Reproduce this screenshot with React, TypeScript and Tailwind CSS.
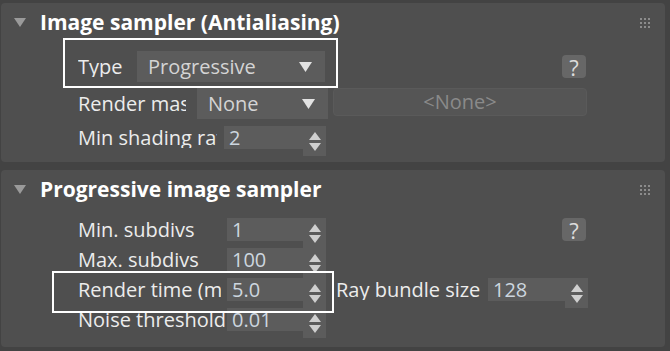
import React from "react";

const FONT = "font-['Open_Sans',_'Noto_Sans',_sans-serif]";

function Caret() {
  return (
    <svg width="12" height="9" viewBox="0 0 12 9" className="shrink-0">
      <path d="M0 0 H12 L6 9 Z" fill="#9a9a9a" />
    </svg>
  );
}

function Grip() {
  return (
    <div className="grid grid-cols-3 gap-[2px] w-[10px]">
      {Array.from({ length: 9 }).map((_, i) => (
        <span key={i} className="w-[2px] h-[2px] bg-[#8c8c8c]" />
      ))}
    </div>
  );
}

function Help() {
  return (
    <div className="w-[24px] h-[23px] rounded-[4px] bg-[#676767] flex items-center justify-center text-[22px] leading-none text-[#dcdcdc]">
      ?
    </div>
  );
}

function Dropdown({ value, width }: { value: string; width: string }) {
  return (
    <div className={`${width} h-[31px] bg-[#5c5c5c] flex items-center pl-[11px] pr-[13px] shrink-0`}>
      <span className="text-[20px] text-[#d4d4d4] leading-none">{value}</span>
      <svg width="13" height="10" viewBox="0 0 13 10" className="ml-auto">
        <path d="M0 0 H13 L6.5 10 Z" fill="#e2e2e2" />
      </svg>
    </div>
  );
}

function Spinner({ value, width }: { value: string; width: string }) {
  return (
    <div className={`${width} h-[30px] flex items-start shrink-0`}>
      <div className="flex-1 h-[23px] bg-[#5c5c5c] flex items-center pl-[5px]">
        <span className="text-[20px] text-[#cdd6df] leading-none">{value}</span>
      </div>
      <div className="w-[23px] h-[30px] bg-[#5c5c5c] flex flex-col items-center justify-center gap-[3px]">
        <svg width="12" height="8" viewBox="0 0 12 8">
          <path d="M6 0 L12 8 H0 Z" fill="#cfcfcf" />
        </svg>
        <svg width="12" height="8" viewBox="0 0 12 8">
          <path d="M0 0 H12 L6 8 Z" fill="#cfcfcf" />
        </svg>
      </div>
    </div>
  );
}

function Label({ text, width }: { text: string; width: string }) {
  return (
    <div className={`${width} shrink-0 overflow-hidden whitespace-nowrap text-[20px] leading-none text-[#ececec]`}>
      {text}
    </div>
  );
}

function Header({ title }: { title: string }) {
  return (
    <div className="h-[36px] pt-[3px] flex items-center pl-[13px] pr-[15px]">
      <Caret />
      <span className="ml-[14px] text-[21px] font-bold text-white leading-none">{title}</span>
      <div className="ml-auto">
        <Grip />
      </div>
    </div>
  );
}

export default function App() {
  return (
    <div className={`${FONT} relative w-[670px] h-[351px] bg-[#434343] pt-[3px] pl-[1px] overflow-hidden`}>
      {/* Image sampler panel */}
      <div className="w-[664px] h-[159px] rounded-[4px] bg-[#4f4f4f] flex flex-col">
        <Header title="Image sampler (Antialiasing)" />
        <div className="mt-[12px] ml-[77px] flex items-center">
          <Label text="Type" width="w-[59px]" />
          <Dropdown value="Progressive" width="w-[188px]" />
          <div className="ml-[237px]">
            <Help />
          </div>
        </div>
        <div className="mt-[6px] ml-[77px] flex items-start">
          <div className="w-[119px] h-[31px] flex items-center shrink-0">
            <Label text="Render mask" width="w-[108px]" />
          </div>
          <Dropdown value="None" width="w-[131px]" />
          <div className="ml-[5px] w-[254px] h-[28px] rounded-[4px] bg-[#555555] border border-[#5a5a5a] flex items-center justify-center">
            <span className="text-[20px] leading-none text-[#8a8a8a]">&lt;None&gt;</span>
          </div>
        </div>
        <div className="mt-[7px] ml-[77px] flex items-start">
          <div className="w-[146px] h-[23px] flex items-center shrink-0">
            <Label text="Min shading rate" width="w-[139px]" />
          </div>
          <Spinner value="2" width="w-[102px]" />
        </div>
      </div>

      {/* Progressive image sampler panel */}
      <div className="mt-[8px] w-[664px] h-[177px] rounded-[4px] bg-[#4f4f4f] flex flex-col">
        <Header title="Progressive image sampler" />
        <div className="mt-[12px] ml-[77px] flex items-start">
          <div className="w-[149px] h-[23px] flex items-center shrink-0">
            <Label text="Min. subdivs" width="w-[146px]" />
          </div>
          <Spinner value="1" width="w-[99px]" />
          <div className="ml-[236px]">
            <Help />
          </div>
        </div>
        <div className="ml-[77px] flex items-start">
          <div className="w-[149px] h-[23px] flex items-center shrink-0">
            <Label text="Max. subdivs" width="w-[146px]" />
          </div>
          <Spinner value="100" width="w-[99px]" />
        </div>
        <div className="ml-[77px] flex items-start">
          <div className="w-[149px] h-[23px] flex items-center shrink-0">
            <Label text="Render time (min)" width="w-[143px]" />
          </div>
          <Spinner value="5.0" width="w-[99px]" />
          <div className="ml-[10px] w-[152px] h-[23px] flex items-center shrink-0">
            <Label text="Ray bundle size" width="w-[152px]" />
          </div>
          <Spinner value="128" width="w-[100px]" />
        </div>
        <div className="ml-[77px] flex items-start">
          <div className="w-[149px] h-[23px] flex items-center shrink-0">
            <Label text="Noise threshold" width="w-[147px]" />
          </div>
          <Spinner value="0.01" width="w-[99px]" />
        </div>
      </div>

      {/* annotation boxes */}
      <div className="absolute left-[63px] top-[38px] w-[275px] h-[50px] border-2 border-white pointer-events-none" />
      <div className="absolute left-[52px] top-[271px] w-[282px] h-[42px] border-2 border-white pointer-events-none" />
    </div>
  );
}
